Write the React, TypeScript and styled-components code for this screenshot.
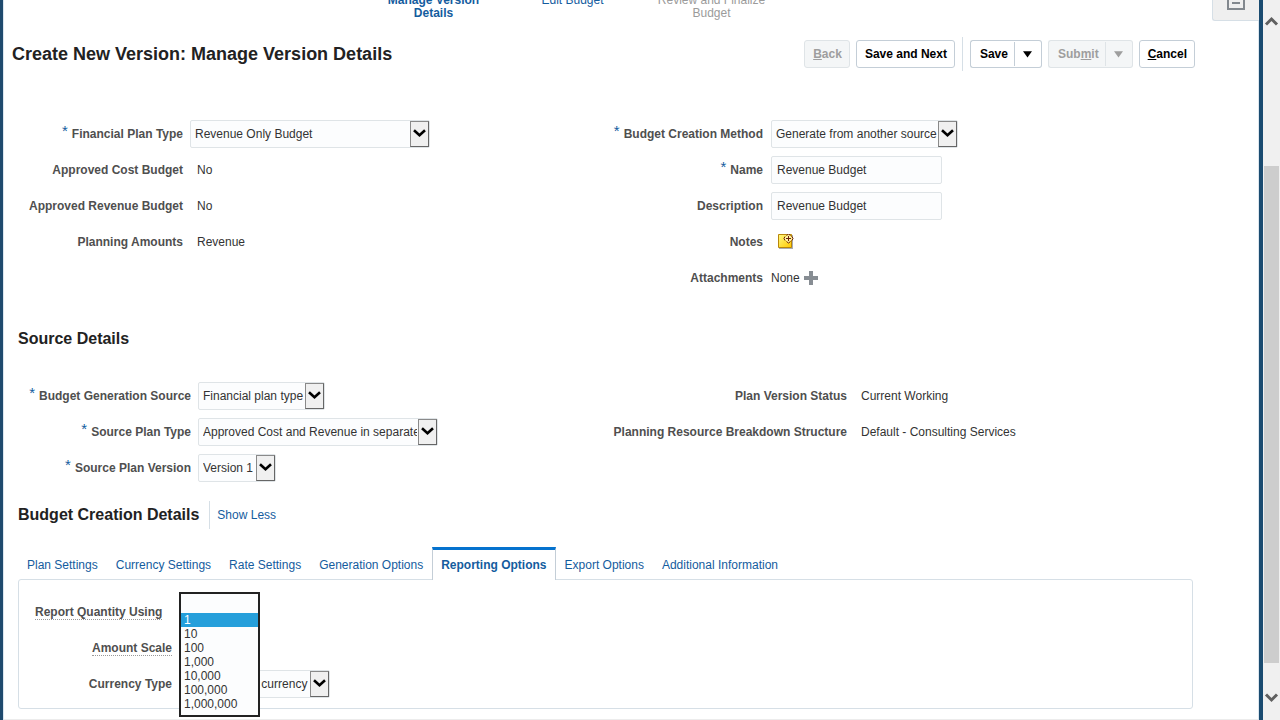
import React from "react";
import styled, { createGlobalStyle, css } from "styled-components";

const GlobalStyle = createGlobalStyle`
  *, *::before, *::after { box-sizing: border-box; }
  body {
    margin: 0;
    background: #fff;
    color: #333;
    font: 12px/14px "Liberation Sans", Arial, sans-serif;
  }
  button, input, select { font: inherit; color: inherit; }
  h1, h2, ul, dl { margin: 0; padding: 0; }
`;

const Shell = styled.div`
  display: flex;
  min-height: 100vh;
`;

const Page = styled.main`
  flex: 1;
  min-width: 0;
  border-left: 3px solid #1f4a6e;
  border-right: 4px solid #1a4b70;
  box-shadow: inset 1px 0 #dbe6ef, inset -1px 0 #dbe6ef, inset 0 -1px #ececec;
`;

const Header = styled.header`
  display: flex;
  justify-content: space-between;
  height: 21px;
  padding-left: 361px;
  overflow: hidden;
`;

const Steps = styled.ol`
  display: flex;
  margin: -6px 0 0;
  padding: 0;
  list-style: none;
  line-height: 13px;
  text-align: center;
`;

const Step = styled.li<{ $state?: "current" | "later" }>`
  width: 139px;
  padding: 0 14px;
  color: ${(p) => (p.$state === "later" ? "#9b9b9b" : "#145c9e")};
  font-weight: ${(p) => (p.$state === "current" ? "bold" : "normal")};
  a { color: inherit; text-decoration: none; }
`;

const PanelToggle = styled.button`
  display: flex;
  justify-content: center;
  width: 47px;
  padding: 0;
  border: solid #d6dfe6;
  border-width: 0 0 1px 1px;
  border-radius: 0 0 0 3px;
  background: #efefef;
`;

const TitleBar = styled.div`
  display: flex;
  align-items: center;
  justify-content: space-between;
  margin-top: 16px;
  padding: 0 64px 0 9px;
`;

const PageTitle = styled.h1`
  color: #222;
  font-size: 18px;
  line-height: 22px;
`;

const Actions = styled.div`
  display: flex;
  align-items: center;
  gap: 6px;
`;

const buttonFrame = css`
  height: 28px;
  border: 1px solid #c4ced7;
  border-radius: 3px;
  background: #fff;
  color: #000;
  &:disabled {
    border-color: #dfe4e7;
    background: #f4f6f7;
    color: #9e9e9e;
  }
`;

const Button = styled.button`
  ${buttonFrame}
  padding: 0 7px 0 8px;
  font-weight: bold;
`;

const SplitButton = styled.div`
  display: flex;
  ${Button} {
    padding: 0 6px 0 9px;
    border-right: 0;
    border-radius: 3px 0 0 3px;
  }
`;

const SplitArrow = styled.button`
  ${buttonFrame}
  display: flex;
  align-items: center;
  width: 28px;
  padding: 0;
  border-left: 0;
  border-radius: 0 3px 3px 0;
  svg {
    box-sizing: content-box;
    padding: 8px 9px 8px 8px;
    border-left: 1px solid #c4ced7;
  }
  &:disabled svg { border-color: #dfe4e7; }
`;

const Divider = styled.span`
  width: 1px;
  height: 34px;
  margin: 0 1px;
  background: #d6dfe6;
`;

const SectionHeader = styled.div`
  display: flex;
  align-items: center;
  height: 28px;
  padding-left: 15px;
`;

const SectionTitle = styled.h2`
  color: #222;
  font-size: 16px;
  line-height: 20px;
`;

const ShowLess = styled.a`
  margin-left: 10px;
  padding: 7px;
  border-left: 1px solid #d6dfe6;
  color: #145c9e;
  text-decoration: none;
`;

const FormColumns = styled.div<{ $top: number; $bottom: number }>`
  display: grid;
  grid-template-columns: 1fr 1fr;
  padding: ${(p) => `${p.$top}px 60px ${p.$bottom}px 26px`};
`;

const FieldList = styled.div<{ $labels: number; $gap?: number }>`
  display: grid;
  grid-template-columns: ${(p) => p.$labels}px 1fr;
  grid-auto-rows: 36px;
  align-content: start;
  align-items: center;
  column-gap: ${(p) => p.$gap ?? 7}px;
`;

const Label = styled.label<{ $start?: boolean }>`
  justify-self: ${(p) => (p.$start ? "start" : "end")};
  color: #4f4f4f;
  font-weight: bold;
  white-space: nowrap;
`;

const Star = styled.span`
  margin-right: 4px;
  color: #145c9e;
  font-size: 15px;
  font-weight: normal;
  vertical-align: 2px;
  line-height: 1px;
`;

const Hint = styled.span`
  display: block;
  border-bottom: 1px dotted #999;
`;

const Value = styled.output<{ $flush?: boolean }>`
  display: flex;
  align-items: center;
  gap: 4px;
  padding-left: ${(p) => (p.$flush ? 0 : 7)}px;
`;

const IconButton = styled.button`
  display: flex;
  padding: 0;
  border: 0;
  background: none;
`;

const TextInput = styled.input`
  width: 171px;
  height: 28px;
  padding: 0 5px;
  border: 1px solid #dfe4e7;
  border-radius: 2px;
  background: #fcfdfe;
`;

const SelectFrame = styled.div<{ $width: number }>`
  display: grid;
  grid-template-columns: 1fr 19px;
  width: ${(p) => p.$width}px;
  height: 28px;
  border: 1px solid #dfe4e7;
  border-radius: 2px;
  background: #fcfdfe;
`;

const NativeSelect = styled.select`
  grid-area: 1 / 1 / 2 / 3;
  min-width: 0;
  padding: 0 20px 0 4px;
  border: 0;
  background: none;
  appearance: none;
`;

const SelectArrow = styled.span`
  grid-area: 1 / 2;
  display: flex;
  align-items: center;
  justify-content: center;
  border: 1px solid #8a8a8a;
  border-right-color: #666;
  border-bottom-color: #666;
  background: #f0f0f0;
  pointer-events: none;
`;

const Tabs = styled.div`
  display: flex;
  align-items: flex-end;
  height: 33px;
  margin: 18px 0 -1px 15px;
`;

const Tab = styled.button<{ $active?: boolean }>`
  height: 33px;
  padding: 3px 9px 0;
  border: 0;
  background: #fff0;
  color: #145c9e;
  white-space: nowrap;
  ${(p) =>
    p.$active &&
    css`
      padding: 0 8px;
      border: solid #c4ced7;
      border-width: 3px 1px 0;
      border-top-color: #0572ce;
      background: #fff;
      font-weight: bold;
    `}
`;

const TabPanel = styled.section`
  height: 130px;
  margin: 0 66px 9px 15px;
  padding: 14px 16px;
  border: 1px solid #d6dfe6;
  border-radius: 3px;
`;

const MenuAnchor = styled.div`
  position: relative;
`;

const Menu = styled.ul`
  position: absolute;
  top: -6px;
  left: 0;
  z-index: 1;
  width: 81px;
  padding-bottom: 4px;
  border: 2px solid #222;
  background: #fcfdfe;
  list-style: none;
`;

const MenuItem = styled.li`
  height: 14px;
  padding-left: 3px;
  &:first-child { height: 19px; }
  &[aria-selected="true"] {
    background: #259fdb;
    color: #fff;
  }
`;

const Scrollbar = styled.div`
  position: sticky;
  top: 0;
  display: flex;
  flex-direction: column;
  width: 17px;
  height: 100vh;
  padding: 16px 1px;
  background: #f0f0f0;
`;

const ScrollGap = styled.span<{ $grow: number }>`
  flex: ${(p) => p.$grow} 0 0;
`;

const ScrollThumb = styled.span`
  flex: 497 0 0;
  background: #cdcdcd;
`;

function Chevron() {
  return (
    <svg width="13" height="10" viewBox="0 0 13 10" aria-hidden="true">
      <path d="M1 1.300 6.500 6.300 12 1.300" fill="none" stroke="#000" strokeWidth="2.600" />
    </svg>
  );
}

function Triangle() {
  return (
    <svg width="10" height="8" viewBox="0 0 10 8" aria-hidden="true">
      <path d="M0 1h10L5 8z" fill="currentColor" />
    </svg>
  );
}

function ScrollArrow({ down }: { down?: boolean }) {
  return (
    <svg width="15" height="11" viewBox="0 0 15 11" aria-hidden="true">
      <path
        d={down ? "M2 1.500 7.500 7 13 1.500" : "M2 8.500 7.500 3 13 8.500"}
        fill="none"
        stroke="#606060"
        strokeWidth="3"
      />
    </svg>
  );
}

function NoteIcon() {
  return (
    <svg width="16" height="16" viewBox="0 0 16 16" aria-hidden="true">
      <defs>
        <linearGradient id="note" x1="0" y1="0" x2="1" y2="1">
          <stop offset="0" stopColor="#fffa80" />
          <stop offset="1" stopColor="#ffc800" />
        </linearGradient>
      </defs>
      <path d="M1 1h14v14H1z" fill="#a9adb5" />
      <path d="M.5 .5h13v13H.5z" fill="url(#note)" stroke="#b8860b" />
      <path d="M10.500 0 15 4.500 10.500 9 6 4.500z" fill="#fff3a0" />
      <path
        d="M8.500 1.500 10.500 0l2 1.500M14 2.500l1 2-1 2M12.500 7.500l-2 1.500-2-1.500M7 6.500l-1-2 1-2M10.500 2v5M8 4.500h5"
        fill="none"
        stroke="#6b1f08"
      />
    </svg>
  );
}

function Select({ id, width, value }: { id: string; width: number; value: string }) {
  return (
    <SelectFrame $width={width}>
      <NativeSelect id={id} defaultValue={value}>
        <option>{value}</option>
      </NativeSelect>
      <SelectArrow>
        <Chevron />
      </SelectArrow>
    </SelectFrame>
  );
}

type FieldLabelProps = {
  htmlFor: string;
  required?: boolean;
  hint?: boolean;
  start?: boolean;
  children: string;
};

function FieldLabel({ htmlFor, required, hint, start, children }: FieldLabelProps) {
  return (
    <Label htmlFor={htmlFor} $start={start}>
      {required && <Star>*</Star>}
      {hint ? <Hint>{children}</Hint> : children}
    </Label>
  );
}

const tabs = [
  "Plan Settings",
  "Currency Settings",
  "Rate Settings",
  "Generation Options",
  "Reporting Options",
  "Export Options",
  "Additional Information",
];

const scales = ["", "1", "10", "100", "1,000", "10,000", "100,000", "1,000,000"];

export default function App() {
  return (
    <Shell>
      <GlobalStyle />
      <Page>
        <Header>
          <Steps>
            <Step $state="current" aria-current="step">Manage Version Details</Step>
            <Step><a href="#edit">Edit Budget</a></Step>
            <Step $state="later">Review and Finalize Budget</Step>
          </Steps>
          <PanelToggle aria-label="Open panel">
            <svg width="18" height="11" viewBox="0 0 18 11" aria-hidden="true">
              <path d="M1 0v9h16V0M5 3h8" fill="none" stroke="#82888e" strokeWidth="2" />
            </svg>
          </PanelToggle>
        </Header>

        <TitleBar>
          <PageTitle>Create New Version: Manage Version Details</PageTitle>
          <Actions>
            <Button disabled><u>B</u>ack</Button>
            <Button>Save and Next</Button>
            <Divider />
            <SplitButton>
              <Button>Save</Button>
              <SplitArrow aria-label="More save options"><Triangle /></SplitArrow>
            </SplitButton>
            <SplitButton>
              <Button disabled>Sub<u>m</u>it</Button>
              <SplitArrow disabled aria-label="More submit options"><Triangle /></SplitArrow>
            </SplitButton>
            <Button><u>C</u>ancel</Button>
          </Actions>
        </TitleBar>

        <FormColumns $top={45} $bottom={29}>
          <FieldList $labels={154}>
            <FieldLabel htmlFor="planType" required>Financial Plan Type</FieldLabel>
            <Select id="planType" width={240} value="Revenue Only Budget" />
            <FieldLabel htmlFor="costBudget">Approved Cost Budget</FieldLabel>
            <Value id="costBudget">No</Value>
            <FieldLabel htmlFor="revenueBudget">Approved Revenue Budget</FieldLabel>
            <Value id="revenueBudget">No</Value>
            <FieldLabel htmlFor="amounts">Planning Amounts</FieldLabel>
            <Value id="amounts">Revenue</Value>
          </FieldList>
          <FieldList $labels={149} $gap={8}>
            <FieldLabel htmlFor="method" required>Budget Creation Method</FieldLabel>
            <Select id="method" width={187} value="Generate from another source" />
            <FieldLabel htmlFor="name" required>Name</FieldLabel>
            <TextInput id="name" defaultValue="Revenue Budget" />
            <FieldLabel htmlFor="description">Description</FieldLabel>
            <TextInput id="description" defaultValue="Revenue Budget" />
            <FieldLabel htmlFor="notes">Notes</FieldLabel>
            <Value as="div">
              <IconButton id="notes" aria-label="Add note"><NoteIcon /></IconButton>
            </Value>
            <FieldLabel htmlFor="attachments">Attachments</FieldLabel>
            <Value as="div" $flush>
              None
              <IconButton id="attachments" aria-label="Add attachment">
                <svg width="14" height="14" viewBox="0 0 14 14" aria-hidden="true">
                  <path d="M7 0v14M0 7h14" stroke="#878d93" strokeWidth="4" />
                </svg>
              </IconButton>
            </Value>
          </FieldList>
        </FormColumns>

        <SectionHeader>
          <SectionTitle>Source Details</SectionTitle>
        </SectionHeader>
        <FormColumns $top={25} $bottom={15}>
          <FieldList $labels={162}>
            <FieldLabel htmlFor="source" required>Budget Generation Source</FieldLabel>
            <Select id="source" width={127} value="Financial plan type" />
            <FieldLabel htmlFor="sourceType" required>Source Plan Type</FieldLabel>
            <Select id="sourceType" width={240} value="Approved Cost and Revenue in separate versions" />
            <FieldLabel htmlFor="sourceVersion" required>Source Plan Version</FieldLabel>
            <Select id="sourceVersion" width={78} value="Version 1" />
          </FieldList>
          <FieldList $labels={233}>
            <FieldLabel htmlFor="status">Plan Version Status</FieldLabel>
            <Value id="status">Current Working</Value>
            <FieldLabel htmlFor="structure">Planning Resource Breakdown Structure</FieldLabel>
            <Value id="structure">Default - Consulting Services</Value>
          </FieldList>
        </FormColumns>

        <SectionHeader>
          <SectionTitle>Budget Creation Details</SectionTitle>
          <ShowLess href="#less">Show Less</ShowLess>
        </SectionHeader>
        <Tabs role="tablist">
          {tabs.map((name) => (
            <Tab
              key={name}
              role="tab"
              aria-selected={name === "Reporting Options"}
              $active={name === "Reporting Options"}
            >
              {name}
            </Tab>
          ))}
        </Tabs>
        <TabPanel role="tabpanel" aria-label="Reporting Options">
          <FieldList $labels={137}>
            <FieldLabel htmlFor="quantity" hint start>Report Quantity Using</FieldLabel>
            <MenuAnchor>
              <Select id="quantity" width={70} value="1" />
              <Menu role="listbox" aria-label="Report Quantity Using">
                {scales.map((scale) => (
                  <MenuItem key={scale} role="option" aria-selected={scale === "1"}>
                    {scale}
                  </MenuItem>
                ))}
              </Menu>
            </MenuAnchor>
            <FieldLabel htmlFor="scale" hint>Amount Scale</FieldLabel>
            <Select id="scale" width={70} value="1" />
            <FieldLabel htmlFor="currency">Currency Type</FieldLabel>
            <Select id="currency" width={151} value="Project ledger currency" />
          </FieldList>
        </TabPanel>
      </Page>
      <Scrollbar aria-hidden="true">
        <ScrollArrow />
        <ScrollGap $grow={139} />
        <ScrollThumb />
        <ScrollGap $grow={30} />
        <ScrollArrow down />
      </Scrollbar>
    </Shell>
  );
}
